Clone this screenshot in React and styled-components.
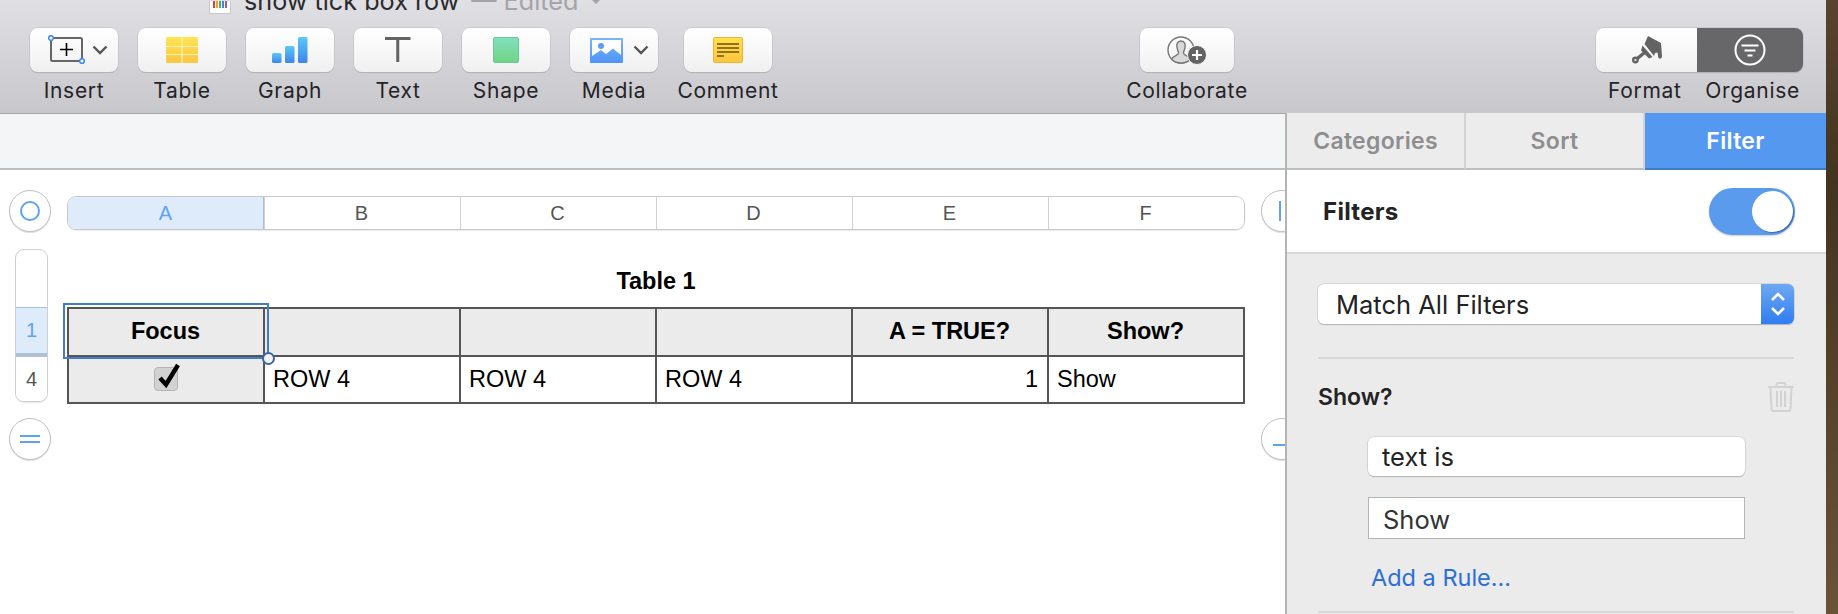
import styled, { createGlobalStyle } from "styled-components";

const Global = createGlobalStyle`
  html, body {
    margin: 0;
    padding: 0;
    width: 1838px;
    height: 614px;
    overflow: hidden;
    background: #fff;
  }
  * { box-sizing: border-box; }
`;

const SF = `Inter, "Liberation Sans", sans-serif`;
const HELV = `"Liberation Sans", Arial, sans-serif`;

const Page = styled.div`
  display: flex;
  width: 1838px;
  height: 614px;
  overflow: hidden;
`;

const Desktop = styled.div`
  width: 12px;
  background: linear-gradient(180deg, #57442d 0%, #43341f 30%, #6a5337 100%);
`;

const Window = styled.div`
  width: 1826px;
  display: flex;
  flex-direction: column;
`;

const Toolbar = styled.div`
  height: 114px;
  flex: none;
  overflow: hidden;
  background: linear-gradient(180deg, #e0dfe3 0%, #c8c7cb 100%);
  border-bottom: 1px solid #a6a5a8;
  font-family: ${SF};
`;

const TitleRow = styled.div`
  height: 28px;
  padding: 0 0 15px 209px;
  display: flex;
  align-items: flex-end;
  font-size: 25.2px;
  line-height: 24px;
  white-space: nowrap;
`;

const DocIcon = styled.div`
  width: 22px;
  height: 13px;
  margin-bottom: -1px;
  margin-right: 13px;
  background: #fff;
  border: 1px solid #c9c9c9;
  border-top: none;
  display: flex;
  justify-content: center;
  align-items: flex-start;
`;

const TitleName = styled.span`
  color: #2b2b2d;
`;

const TitleEdited = styled.span`
  color: #a5a4a8;
  margin-left: 12px;
`;

const TitleCaret = styled.svg`
  margin: 0 0 9px 12px;
`;

const Tools = styled.div`
  display: flex;
  padding-left: 30px;
`;

const Tool = styled.div`
  display: flex;
  flex-direction: column;
  align-items: center;
  width: ${(p) => p.$w || 88}px;
  margin-right: ${(p) => p.$mr ?? 20}px;
`;

const ToolButton = styled.div`
  width: 100%;
  height: 44px;
  display: flex;
  align-items: center;
  justify-content: center;
  gap: ${(p) => p.$gap || 0}px;
  padding-left: ${(p) => p.$pad || 0}px;
  background: linear-gradient(180deg, #ffffff 0%, #f0f0f0 100%);
  border-radius: 8px;
  box-shadow: 0 0 0 0.5px #bdbcbf, 0 1px 1px rgba(0, 0, 0, 0.18);
`;

const ToolLabel = styled.div`
  margin-top: 7px;
  font-size: 21px;
  line-height: 24px;
  color: #242327;
  white-space: nowrap;
  letter-spacing: 0.7px;
`;

const Spacer = styled.div`
  width: ${(p) => p.$w}px;
  flex: none;
`;

const Segments = styled.div`
  width: 207px;
  height: 44px;
  display: flex;
  border-radius: 8px;
  overflow: hidden;
  box-shadow: 0 0 0 0.5px #bdbcbf, 0 1px 1px rgba(0, 0, 0, 0.18);
`;

const Segment = styled.div`
  width: ${(p) => p.$w}px;
  display: flex;
  align-items: center;
  justify-content: center;
  background: ${(p) =>
    p.$on ? "#676769" : "linear-gradient(180deg, #ffffff 0%, #f0f0f0 100%)"};
`;

const SegLabels = styled.div`
  display: flex;
  justify-content: space-between;
  width: 207px;
  padding: 0 3px 0 12px;
`;

const Body = styled.div`
  flex: 1;
  display: flex;
  min-height: 0;
`;

const Main = styled.div`
  width: 1285px;
  flex: none;
  overflow: hidden;
  background: #fff;
`;

const FormulaBar = styled.div`
  height: 56px;
  background: #f4f5f7;
  border-bottom: 2px solid #bcbfc2;
`;

const Sheet = styled.div`
  display: grid;
  grid-template-columns: 67px 1178px 16px 42px;
  grid-template-rows: 26px 34px 19px 153px 16px 42px;
  width: 1303px;
`;

const RoundButton = styled.div`
  grid-column: ${(p) => p.$col};
  grid-row: ${(p) => (p.$bottom ? 6 : "1 / 3")};
  align-self: end;
  margin-bottom: ${(p) => (p.$bottom ? 0 : -2)}px;
  margin-left: ${(p) => (p.$col === 1 ? 9 : 0)}px;
  width: 42px;
  height: 42px;
  border-radius: 50%;
  background: #fff;
  border: 1px solid #c0c0c0;
  box-shadow: 0 1px 1px rgba(0, 0, 0, 0.14);
  display: flex;
  flex-direction: column;
  align-items: ${(p) => (p.$pad ? "flex-start" : "center")};
  justify-content: center;
  gap: 4px;
  padding-left: ${(p) => p.$pad || 0}px;
  padding-top: ${(p) => p.$top || 0}px;
  flex: none;
`;

const RoundRing = styled.div`
  width: 20px;
  height: 20px;
  border-radius: 50%;
  border: 2px solid #5ea2f3;
`;

const BlueBar = styled.div`
  background: #5ea2f3;
  width: ${(p) => p.$w}px;
  height: ${(p) => p.$h}px;
  flex: none;
`;

const ColHeaders = styled.div`
  grid-column: 2;
  grid-row: 2;
  display: grid;
  grid-template-columns: repeat(6, 196px);
  border: 1px solid #c8c8c8;
  border-radius: 9px;
  overflow: hidden;
  box-shadow: 0 1px 1px rgba(0, 0, 0, 0.08);
`;

const ColHead = styled.div`
  display: flex;
  align-items: center;
  justify-content: center;
  padding-right: ${(p) => (p.$first ? 0 : 2)}px;
  font-family: ${HELV};
  font-size: 20px;
  color: ${(p) => (p.$on ? "#5ea2f3" : "#555")};
  background: ${(p) => (p.$on ? "#deebfb" : "#fff")};
  border-left: ${(p) => (p.$first ? "none" : "1px solid #d0d0d0")};
  border-right: ${(p) => (p.$on ? "1px solid #a9c0dd" : "none")};
`;

const RowHeaders = styled.div`
  grid-column: 1;
  grid-row: 4;
  width: 33px;
  margin-left: 15px;
  display: flex;
  flex-direction: column;
  border: 1px solid #cfcfcf;
  border-radius: 9px;
  overflow: hidden;
  background: #fff;
  box-shadow: 0 1px 1px rgba(0, 0, 0, 0.1);
`;

const RowHeadBlank = styled.div`
  height: 57px;
`;

const RowHead = styled.div`
  height: ${(p) => p.$h}px;
  display: flex;
  align-items: center;
  justify-content: center;
  font-family: ${HELV};
  font-size: 20px;
  color: ${(p) => (p.$on ? "#5ea2f3" : "#555")};
  background: ${(p) => (p.$on ? "#deebfb" : "#fff")};
  border-top: ${(p) => (p.$on ? "1px solid #a9c0dd" : "none")};
  border-bottom: ${(p) => (p.$on ? "4px solid #aebfd6" : "none")};
`;

const TableArea = styled.div`
  grid-column: 2;
  grid-row: 3 / 5;
  display: flex;
  flex-direction: column;
`;

const TableTitle = styled.div`
  flex: none;
  height: 50px;
  margin-top: 26px;
  display: flex;
  align-items: center;
  justify-content: center;
  font-family: ${HELV};
  font-weight: 700;
  font-size: 23.5px;
  color: #000;
`;

const DataTable = styled.div`
  flex: none;
  display: grid;
  grid-template-columns: repeat(6, 196px);
  grid-template-rows: 48px 47px;
  width: 1178px;
  border-top: 2px solid #555;
  border-left: 2px solid #555;
  margin-top: 1px;
`;

const Cell = styled.div`
  position: relative;
  z-index: ${(p) => (p.$selected ? 1 : "auto")};
  display: flex;
  align-items: center;
  padding: 0 9px 1px 8px;
  justify-content: ${(p) =>
    p.$align === "center" ? "center" : p.$align === "right" ? "flex-end" : "flex-start"};
  font-family: ${HELV};
  font-size: 23.5px;
  font-weight: ${(p) => (p.$head ? 700 : 400)};
  color: #000;
  background: ${(p) => (p.$shade ? "#ebebeb" : "#fff")};
  border-right: 2px solid #555;
  border-bottom: 2px solid #555;
  white-space: nowrap;
`;

const Selection = styled.div`
  position: absolute;
  left: -6px;
  top: -6px;
  width: 206px;
  height: 56px;
  border: 2px solid #3f7cc9;
  pointer-events: none;
`;

const Handle = styled.div`
  position: absolute;
  right: -8px;
  bottom: -8px;
  width: 13px;
  height: 13px;
  border-radius: 50%;
  background: #f2f4f8;
  border: 2px solid #3d66a5;
`;

const Tick = styled.div`
  width: 24px;
  height: 24px;
  position: relative;
  background: #d2d2d2;
  border: 1px solid #b4b4b4;
  border-radius: 4px;
`;

const TickMark = styled.svg`
  position: absolute;
  left: 3px;
  top: -5px;
`;

const Sidebar = styled.div`
  flex: 1;
  display: flex;
  flex-direction: column;
  border-left: 2px solid #b4b4b4;
  margin-top: -1px;
  background: #ebebeb;
  font-family: ${SF};
  overflow: hidden;
`;

const Tabs = styled.div`
  height: 57px;
  display: flex;
  flex: none;
`;

const Tab = styled.div`
  width: ${(p) => p.$w}px;
  display: flex;
  align-items: center;
  justify-content: center;
  font-size: 23px;
  font-weight: 600;
  letter-spacing: 0.3px;
  color: ${(p) => (p.$on ? "#fff" : "#8e8e90")};
  background: ${(p) => (p.$on ? "#5598f0" : "#ececec")};
  border-right: ${(p) => (p.$on ? "none" : "2px solid #d3d3d3")};
  border-bottom: 2px solid ${(p) => (p.$on ? "#3f7cc9" : "#bcbfc2")};
`;

const FilterHead = styled.div`
  height: 84px;
  flex: none;
  background: #fff;
  border-bottom: 2px solid #d8d8d8;
  display: flex;
  align-items: center;
  justify-content: space-between;
  padding: 0 31px 0 36px;
  font-size: 24px;
  font-weight: 700;
  letter-spacing: 0.3px;
  color: #232323;
`;

const Toggle = styled.div`
  width: 86px;
  height: 47px;
  border-radius: 24px;
  background: #5a9bee;
  padding: 3px 2px 0 0;
  display: flex;
  justify-content: flex-end;
  align-items: flex-start;
  box-shadow: 0 1px 2px rgba(0, 0, 0, 0.2);
`;

const Knob = styled.div`
  width: 41px;
  height: 41px;
  border-radius: 50%;
  background: #fff;
  box-shadow: 1px 1px 1px #3d69a8;
`;

const FilterBody = styled.div`
  padding: 30px 32px 0 31px;
  display: flex;
  flex-direction: column;
`;

const Select = styled.div`
  height: 40px;
  display: flex;
  background: #fff;
  border-radius: 6px;
  overflow: hidden;
  box-shadow: 0 0 0 0.5px #c4c4c4, 0 1px 1px rgba(0, 0, 0, 0.3);
  font-size: 25.5px;
  color: #232323;
`;

const SelectText = styled.div`
  flex: 1;
  display: flex;
  align-items: center;
  padding-left: 18px;
`;

const Stepper = styled.div`
  width: 33px;
  display: flex;
  align-items: center;
  justify-content: center;
  background: linear-gradient(180deg, #6fa8f2 0%, #2f7df2 100%);
`;

const Divider = styled.div`
  height: 2px;
  flex: none;
  background: #d8d8d8;
  margin-top: ${(p) => p.$mt}px;
`;

const RuleHead = styled.div`
  display: flex;
  align-items: center;
  justify-content: space-between;
  height: 32px;
  margin-top: 22px;
  font-size: 23px;
  font-weight: 600;
  color: #232323;
`;

const RuleBody = styled.div`
  margin-left: 50px;
  width: 377px;
  display: flex;
  flex-direction: column;
`;

const RulePill = styled.div`
  height: 39px;
  margin-top: 24px;
  display: flex;
  align-items: center;
  padding-left: 14px;
  background: #fff;
  border-radius: 6px;
  box-shadow: 0 0 0 0.5px #c4c4c4, 0 1px 1px rgba(0, 0, 0, 0.3);
  font-size: 25.5px;
  color: #232323;
`;

const RuleInput = styled.div`
  height: 42px;
  margin-top: 21px;
  display: flex;
  align-items: center;
  padding: 3px 0 0 14px;
  background: #fff;
  border: 1px solid #b5b5b5;
  font-size: 25.5px;
  color: #333;
`;

const AddRule = styled.div`
  margin: 23px 0 0 3px;
  height: 30px;
  display: flex;
  align-items: center;
  font-size: 23.5px;
  color: #2b6fd6;
`;

const Chevron = ({ size = 16 }) => (
  <svg width={size} height={size * 0.625} viewBox="0 0 16 10" fill="none">
    <path d="M1.5 1.5 L8 8 L14.5 1.5" stroke="#555" strokeWidth="2.4" />
  </svg>
);

const InsertIcon = () => (
  <svg width="38" height="30" viewBox="0 0 38 30" fill="none">
    <rect x="3" y="3" width="31" height="23" rx="1.5" stroke="#666" strokeWidth="2" />
    <path d="M18.5 8 V21 M12 14.5 H25" stroke="#000" strokeWidth="1.6" />
    <circle cx="3" cy="3" r="2.3" fill="#fff" stroke="#3d8bf5" strokeWidth="1.6" />
    <circle cx="34" cy="26" r="2.3" fill="#fff" stroke="#3d8bf5" strokeWidth="1.6" />
  </svg>
);

const TableIcon = () => (
  <svg width="32" height="26" viewBox="0 0 32 26">
    <defs>
      <linearGradient id="tbl" x1="0" y1="0" x2="0" y2="1">
        <stop offset="0" stopColor="#ffe552" />
        <stop offset="1" stopColor="#fbc545" />
      </linearGradient>
    </defs>
    <rect width="32" height="26" rx="1.5" fill="url(#tbl)" />
    <path d="M16 0 V26 M0 9.5 H32 M0 17.5 H32" stroke="#fff3b5" strokeWidth="1.2" />
  </svg>
);

const GraphIcon = () => (
  <svg width="36" height="26" viewBox="0 0 36 26">
    <defs>
      <linearGradient id="gr" x1="0" y1="0" x2="0" y2="1">
        <stop offset="0" stopColor="#5ac8f5" />
        <stop offset="1" stopColor="#3d85ec" />
      </linearGradient>
    </defs>
    <rect x="0" y="16" width="9.5" height="10" rx="1.5" fill="url(#gr)" />
    <rect x="13" y="9" width="9.5" height="17" rx="1.5" fill="url(#gr)" />
    <rect x="26" y="0" width="9.5" height="26" rx="1.5" fill="url(#gr)" />
  </svg>
);

const TextIcon = () => (
  <svg width="26" height="26" viewBox="0 0 26 26">
    <path d="M0 1.5 H25.5 M12.75 1.5 V25" stroke="#636363" strokeWidth="3" fill="none" />
  </svg>
);

const ShapeIcon = () => (
  <svg width="26" height="26" viewBox="0 0 26 26">
    <defs>
      <linearGradient id="sh" x1="0" y1="0" x2="0" y2="1">
        <stop offset="0" stopColor="#82e0c0" />
        <stop offset="1" stopColor="#6fd483" />
      </linearGradient>
    </defs>
    <rect x="0.5" y="0.5" width="25" height="25" rx="1.5" fill="url(#sh)" stroke="#69c79b" />
  </svg>
);

const MediaIcon = () => (
  <svg width="33" height="25" viewBox="0 0 33 25">
    <defs>
      <linearGradient id="md" x1="0" y1="0" x2="0" y2="1">
        <stop offset="0" stopColor="#79b6f8" />
        <stop offset="1" stopColor="#4e94f8" />
      </linearGradient>
    </defs>
    <rect width="33" height="25" rx="1" fill="url(#md)" />
    <path d="M2 2 H31 V17 L23 10.5 L16 16 L11 12 L2 18 Z" fill="#fff" />
    <circle cx="11" cy="8" r="3" fill="#5b9df5" />
  </svg>
);

const CommentIcon = () => (
  <svg width="30" height="26" viewBox="0 0 30 26">
    <defs>
      <linearGradient id="cm" x1="0" y1="0" x2="0" y2="1">
        <stop offset="0" stopColor="#ffe04d" />
        <stop offset="1" stopColor="#fcc53f" />
      </linearGradient>
    </defs>
    <rect x="0.5" y="0.5" width="29" height="25" rx="1.5" fill="url(#cm)" stroke="#ecb53a" />
    <path d="M4 7 H26 M4 11 H26 M4 15 H26 M4 19 H11" stroke="#93701f" strokeWidth="2" />
  </svg>
);

const CollabIcon = () => (
  <svg width="40" height="30" viewBox="0 0 40 30" fill="none">
    <circle cx="14" cy="15" r="13" stroke="#777" strokeWidth="1.4" />
    <path
      d="M14 6 C10 6 9.5 9.5 10 12.5 C10.4 15 11.5 16.5 11.5 18 C11.5 20.5 6 21 4.5 24 C7 27 10.5 28 14 28 C17.5 28 21 27 23.5 24 C22 21 16.5 20.5 16.5 18 C16.5 16.5 17.6 15 18 12.5 C18.5 9.5 18 6 14 6 Z"
      fill="#d9d9d9"
      stroke="#777"
      strokeWidth="1.4"
    />
    <circle cx="30" cy="20" r="9.5" fill="#636363" stroke="#f5f5f5" strokeWidth="1" />
    <path d="M30 15 V25 M25 20 H35" stroke="#fff" strokeWidth="2.2" />
  </svg>
);

const BrushIcon = () => (
  <svg width="30" height="28" viewBox="0 0 30 28" fill="#636363">
    <path d="M16 0 L29 7 L30 20 C30 23.5 26 23.5 26 20 L25.5 16.5 L23 17 L22 20 L12.5 8 Z" />
    <path d="M10.5 9.5 L20.5 21 L17 22.5 L9 14.5 Z" />
    <path d="M12 17 L3.5 24" stroke="#636363" strokeWidth="3.4" fill="none" />
    <circle cx="3.4" cy="24" r="3.4" />
    <circle cx="3.4" cy="24" r="1.1" fill="#f4f4f4" />
  </svg>
);

const OrganiseIcon = () => (
  <svg width="32" height="32" viewBox="0 0 32 32" fill="none">
    <circle cx="16" cy="16" r="14.5" stroke="#fff" strokeWidth="2" />
    <path d="M7.5 11.5 H24.5 M10.5 16.5 H21.5 M13.5 21.5 H18.5" stroke="#fff" strokeWidth="2" />
  </svg>
);

const TrashIcon = () => (
  <svg width="26" height="30" viewBox="0 0 26 30" fill="none" stroke="#d2d2d2" strokeWidth="2">
    <path d="M0 5 H26 M8.5 5 V2.5 C8.5 1.3 9.3 1 10 1 H16 C16.7 1 17.5 1.3 17.5 2.5 V5" />
    <path d="M2.5 5 L3.5 27 C3.6 28.3 4.4 29 5.5 29 H20.5 C21.6 29 22.4 28.3 22.5 27 L23.5 5" />
    <path d="M9 9 V25 M13 9 V25 M17 9 V25" />
  </svg>
);

const StepperIcon = () => (
  <svg width="16" height="26" viewBox="0 0 16 26" fill="none" stroke="#fff" strokeWidth="2.6">
    <path d="M2 9 L8 3 L14 9 M2 17 L8 23 L14 17" />
  </svg>
);

const columns = ["A", "B", "C", "D", "E", "F"];

const App = () => {
  return (
    <Page>
      <Global />
      <Window>
        <Toolbar>
          <TitleRow>
            <DocIcon>
              <svg width="15" height="9" viewBox="0 0 15 9">
                <path d="M1 0V7" stroke="#d6453d" strokeWidth="2" />
                <path d="M4 0V7" stroke="#f0a030" strokeWidth="2" />
                <path d="M7 0V7" stroke="#4caf50" strokeWidth="2" />
                <path d="M10 0V7" stroke="#3d85ec" strokeWidth="2" />
                <path d="M13 0V7" stroke="#8a5bc4" strokeWidth="2" />
              </svg>
            </DocIcon>
            <TitleName>show tick box row</TitleName>
            <TitleEdited>— Edited</TitleEdited>
            <TitleCaret width="12" height="6" viewBox="0 0 12 6">
              <path d="M0 0 H12 L6 6 Z" fill="#a5a4a8" />
            </TitleCaret>
          </TitleRow>
          <Tools>
            <Tool>
              <ToolButton $gap={6} $pad={8}>
                <InsertIcon />
                <Chevron />
              </ToolButton>
              <ToolLabel>Insert</ToolLabel>
            </Tool>
            <Tool>
              <ToolButton><TableIcon /></ToolButton>
              <ToolLabel>Table</ToolLabel>
            </Tool>
            <Tool>
              <ToolButton><GraphIcon /></ToolButton>
              <ToolLabel>Graph</ToolLabel>
            </Tool>
            <Tool>
              <ToolButton><TextIcon /></ToolButton>
              <ToolLabel>Text</ToolLabel>
            </Tool>
            <Tool>
              <ToolButton><ShapeIcon /></ToolButton>
              <ToolLabel>Shape</ToolLabel>
            </Tool>
            <Tool $mr={26}>
              <ToolButton $gap={10} $pad={11}>
                <MediaIcon />
                <Chevron />
              </ToolButton>
              <ToolLabel>Media</ToolLabel>
            </Tool>
            <Tool $mr={0}>
              <ToolButton><CommentIcon /></ToolButton>
              <ToolLabel>Comment</ToolLabel>
            </Tool>
            <Spacer $w={368} />
            <Tool $w={94} $mr={0}>
              <ToolButton><CollabIcon /></ToolButton>
              <ToolLabel>Collaborate</ToolLabel>
            </Tool>
            <Spacer $w={362} />
            <Tool $w={207} $mr={0}>
              <Segments>
                <Segment $w={101}><BrushIcon /></Segment>
                <Segment $w={106} $on><OrganiseIcon /></Segment>
              </Segments>
              <SegLabels>
                <ToolLabel>Format</ToolLabel>
                <ToolLabel>Organise</ToolLabel>
              </SegLabels>
            </Tool>
          </Tools>
        </Toolbar>
        <Body>
          <Main>
            <FormulaBar />
            <Sheet>
              <RoundButton $col={1}>
                <RoundRing />
              </RoundButton>
              <ColHeaders>
                {columns.map((c, i) => (
                  <ColHead key={c} $on={i === 0} $first={i === 0}>{c}</ColHead>
                ))}
              </ColHeaders>
              <RoundButton $col={4} $pad={17}>
                <BlueBar $w={2} $h={20} />
              </RoundButton>
              <RowHeaders>
                <RowHeadBlank />
                <RowHead $on $h={50}>1</RowHead>
                <RowHead $h={44}>4</RowHead>
              </RowHeaders>
              <TableArea>
                <TableTitle>Table 1</TableTitle>
                <DataTable>
                  <Cell $head $shade $align="center" $selected>
                    Focus
                    <Selection><Handle /></Selection>
                  </Cell>
                  <Cell $head $shade />
                  <Cell $head $shade />
                  <Cell $head $shade />
                  <Cell $head $shade $align="center">A = TRUE?</Cell>
                  <Cell $head $shade $align="center">Show?</Cell>
                  <Cell $shade $align="center">
                    <Tick>
                      <TickMark width="24" height="28" viewBox="0 0 24 28">
                        <path d="M2 15 L8 21.5 L20 2" fill="none" stroke="#000" strokeWidth="4.4" />
                      </TickMark>
                    </Tick>
                  </Cell>
                  <Cell>ROW 4</Cell>
                  <Cell>ROW 4</Cell>
                  <Cell>ROW 4</Cell>
                  <Cell $align="right">1</Cell>
                  <Cell>Show</Cell>
                </DataTable>
              </TableArea>
              <RoundButton $col={1} $bottom>
                <BlueBar $w={20} $h={2} />
                <BlueBar $w={20} $h={2} />
              </RoundButton>
              <RoundButton $col={4} $bottom $pad={11} $top={12}>
                <BlueBar $w={20} $h={2} />
              </RoundButton>
            </Sheet>
          </Main>
          <Sidebar>
            <Tabs>
              <Tab $w={179}>Categories</Tab>
              <Tab $w={179}>Sort</Tab>
              <Tab $w={181} $on>Filter</Tab>
            </Tabs>
            <FilterHead>
              Filters
              <Toggle><Knob /></Toggle>
            </FilterHead>
            <FilterBody>
              <Select>
                <SelectText>Match All Filters</SelectText>
                <Stepper><StepperIcon /></Stepper>
              </Select>
              <Divider $mt={33} />
              <RuleHead>
                Show?
                <TrashIcon />
              </RuleHead>
              <RuleBody>
                <RulePill>text is</RulePill>
                <RuleInput>Show</RuleInput>
                <AddRule>Add a Rule...</AddRule>
              </RuleBody>
              <Divider $mt={19} />
            </FilterBody>
          </Sidebar>
        </Body>
      </Window>
      <Desktop />
    </Page>
  );
};

export default App;
